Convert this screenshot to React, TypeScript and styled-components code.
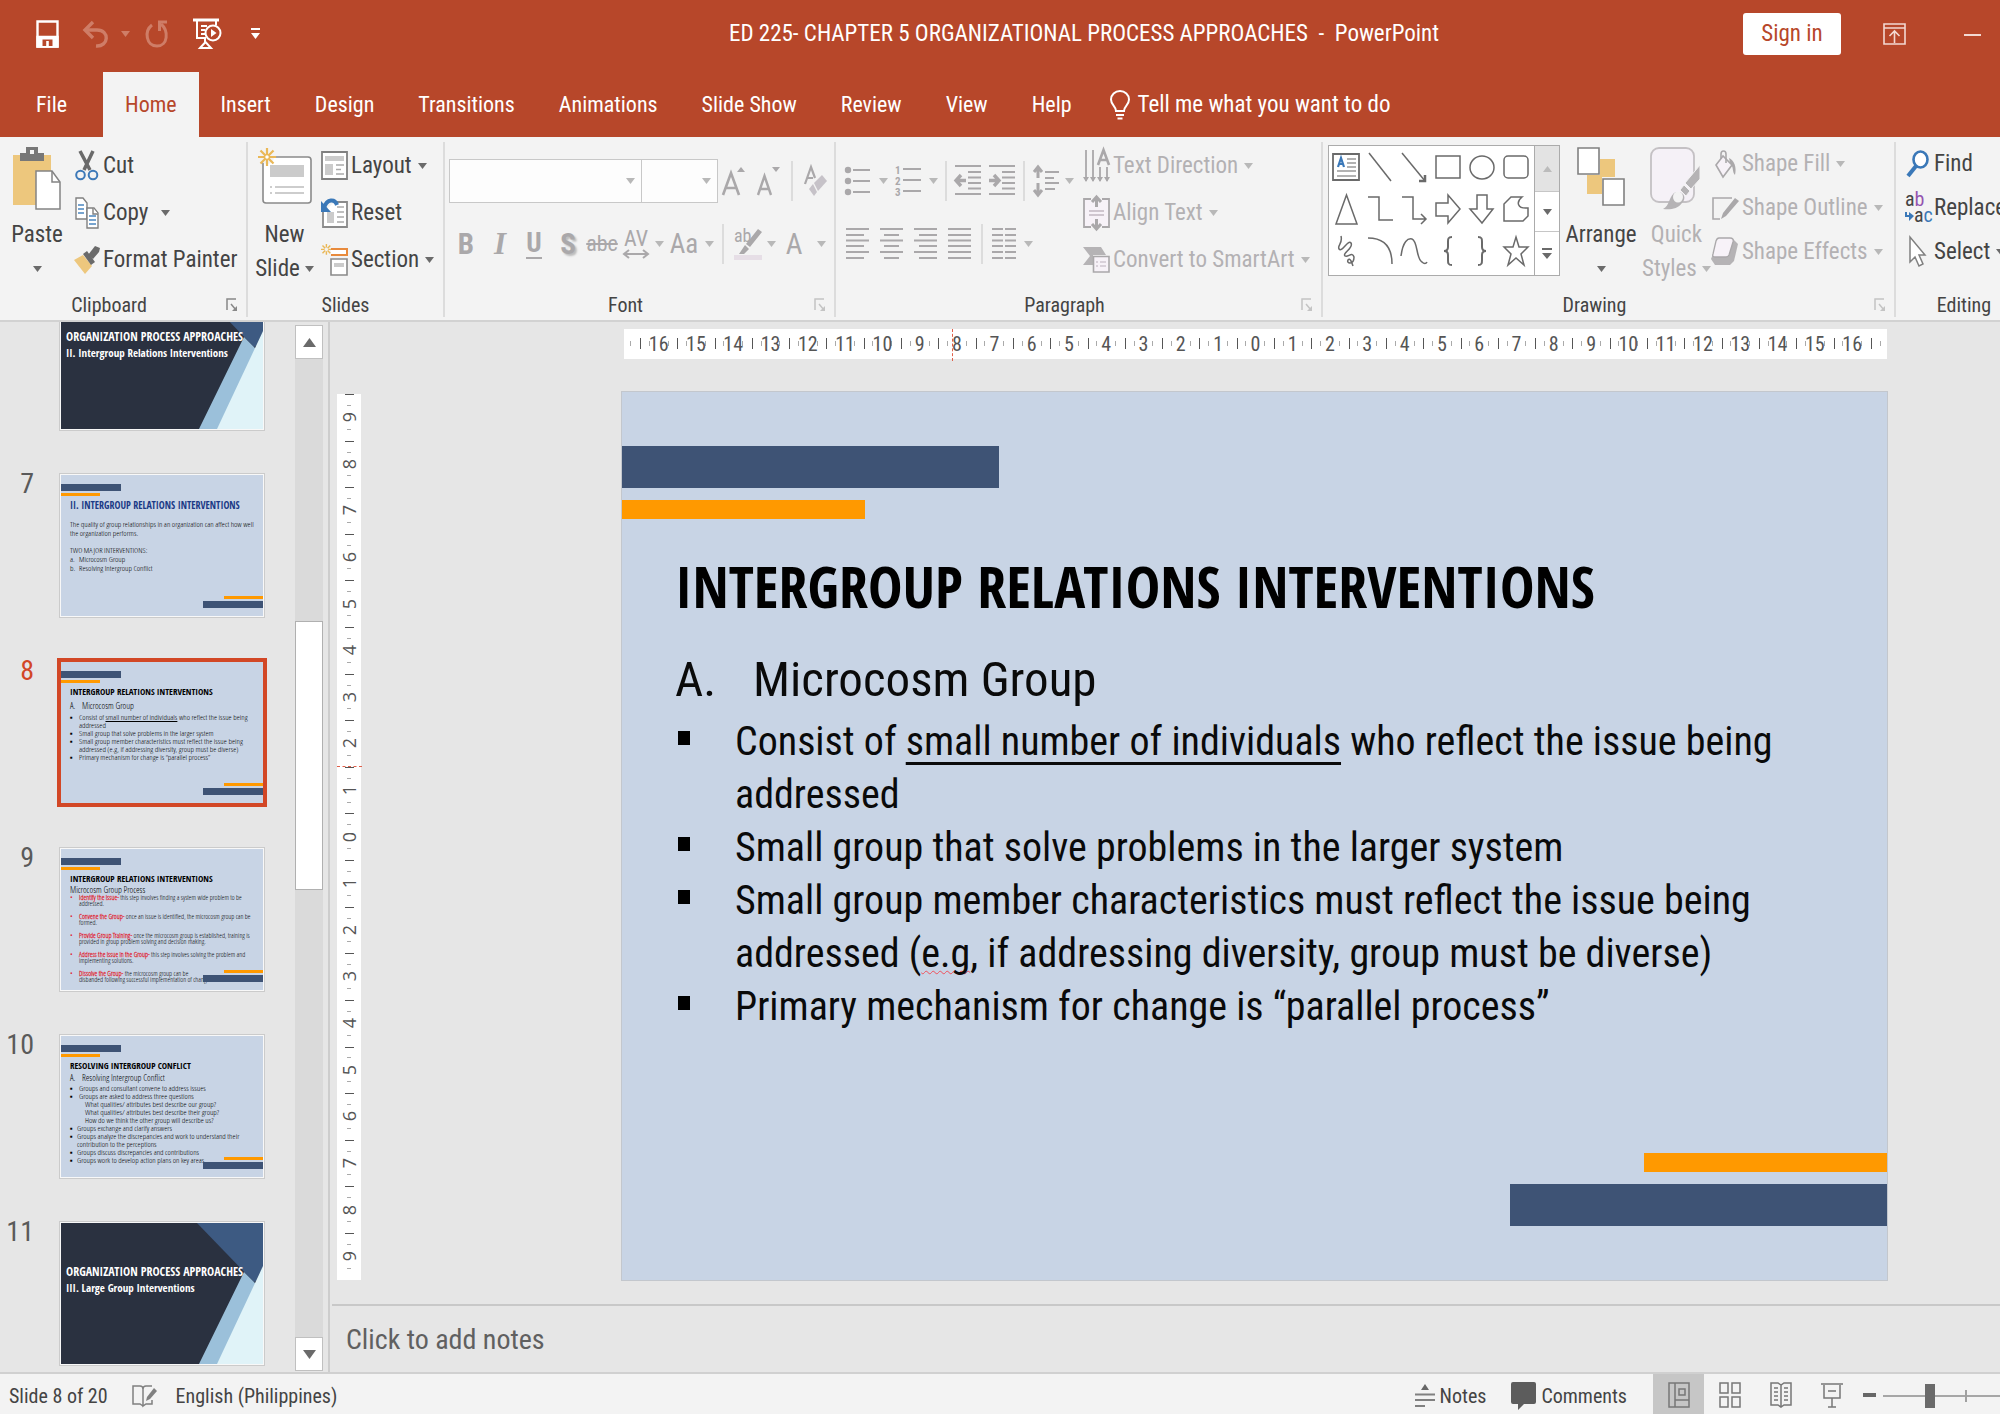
import React from "react";
import styled, { createGlobalStyle, css } from "styled-components";

const ui = `"Roboto Condensed", Roboto, "Open Sans", sans-serif`;
const heading = `"Open Sans Condensed", "Roboto Condensed", sans-serif`;
const mini = `"Open Sans Condensed Light", "Open Sans Condensed", "Roboto Condensed", sans-serif`;

const c = {
  brand: "#b7472a",
  ribbon: "#f3f3f3",
  stage: "#e6e6e6",
  line: "#c8c8c8",
  text: "#444444",
  off: "#b3b1b3",
  offIcon: "#aaa8aa",
  slide: "#c8d4e5",
  navy: "#3e5375",
  orange: "#ff9900",
  select: "#d24726",
};

const GlobalStyle = createGlobalStyle`
  *, *::before, *::after { box-sizing: border-box; }
  body { margin: 0; background: ${c.stage}; font-family: ${ui}; color: ${c.text}; }
  button, input, select { font: inherit; color: inherit; border: 0; background: none; padding: 0; margin: 0; }
  h1, h2, ul, p { margin: 0; padding: 0; font-weight: normal; }
  ul { list-style: none; }
  svg { display: block; flex: none; overflow: visible; }
`;

/* ---------- shell ---------- */

const Shell = styled.div`
  display: flex;
  flex-direction: column;
  height: 100vh;
  min-height: 900px;
  overflow: hidden;
`;

const TitleBar = styled.header`
  display: grid;
  grid-template-columns: 1fr auto 1fr;
  align-items: center;
  height: 72px;
  padding-bottom: 5px;
  background: ${c.brand};
  color: #fff;
`;

const QuickAccess = styled.div`
  display: flex;
  align-items: center;
  padding-left: 36px;
`;

const QuickButton = styled.button<{ $gap: number }>`
  display: flex;
  align-items: center;
  margin-right: ${(p) => p.$gap}px;
`;

const DocTitle = styled.h1`
  font-size: 23px;
  line-height: 30px;
  white-space: pre;
  padding-left: 168px;
`;

const WindowTools = styled.div`
  display: flex;
  align-items: center;
  justify-content: flex-end;
  padding-right: 19px;
`;

const SignIn = styled.button`
  width: 98px;
  height: 42px;
  margin-right: 42px;
  border-radius: 3px;
  background: #fff;
  color: ${c.brand};
  font-size: 23px;
`;

const WindowButton = styled.button<{ $gap?: number }>`
  margin-right: ${(p) => p.$gap ?? 0}px;
`;

const TabBar = styled.nav`
  display: flex;
  height: 65px;
  background: ${c.brand};
  color: #fff;
`;

const Tab = styled.button<{ $active?: boolean; $first?: boolean }>`
  padding: 0 22px;
  font-size: 22px;
  line-height: 64px;
  white-space: nowrap;
  ${(p) => p.$first && css`padding: 0 36px;`}
  ${(p) => p.$active && css`
    background: ${c.ribbon};
    color: ${c.brand};
  `}
`;

const TellMe = styled.button`
  display: flex;
  align-items: center;
  gap: 8px;
  padding: 0 16px;
  font-size: 23px;
  white-space: nowrap;
`;

/* ---------- ribbon ---------- */

const Ribbon = styled.section`
  display: flex;
  height: 185px;
  background: ${c.ribbon};
  border-bottom: 2px solid #d2d2d2;
  overflow: hidden;
`;

const GroupBox = styled.div<{ $w?: number }>`
  flex: ${(p) => (p.$w ? `0 0 ${p.$w}px` : "1 0 136px")};
  display: flex;
  flex-direction: column;
  justify-content: space-between;
  margin: 5px 0 3px;
  border-right: ${(p) => (p.$w ? "2px solid #dcdcdc" : "0")};
`;

const GroupBody = styled.div<{ $pad?: number }>`
  display: flex;
  align-items: flex-start;
  padding-left: ${(p) => p.$pad ?? 0}px;
`;

const GroupFoot = styled.div`
  display: flex;
  align-items: center;
  font-size: 20px;
  line-height: 24px;
  text-align: center;
  white-space: nowrap;
`;

const Launcher = styled.button`
  flex: 0 0 28px;
  display: grid;
  place-items: center;
`;

const GroupName = styled.span`
  flex: 1;
`;

const Big = styled.button<{ $w: number; $off?: boolean }>`
  flex: 0 0 ${(p) => p.$w}px;
  display: flex;
  flex-direction: column;
  align-items: center;
  padding-top: 5px;
  font-size: 23px;
  line-height: 34px;
  white-space: nowrap;
  color: ${(p) => (p.$off ? c.off : c.text)};
`;

const BigIcon = styled.span`
  height: 71px;
`;

const BigLine = styled.span`
  display: flex;
  align-items: center;
  gap: 5px;
  height: 34px;
`;

const Stack = styled.div<{ $left?: number; $row?: number }>`
  display: grid;
  grid-auto-rows: ${(p) => p.$row ?? 47}px;
  margin-left: ${(p) => p.$left ?? 0}px;
`;

const Command = styled.button<{ $off?: boolean; $gap?: number }>`
  display: flex;
  align-items: center;
  gap: ${(p) => p.$gap ?? 6}px;
  font-size: 23px;
  line-height: 30px;
  white-space: nowrap;
  color: ${(p) => (p.$off ? c.off : c.text)};
`;

const CommandIcon = styled.span`
  display: flex;
  width: 27px;
  justify-content: center;
`;

const CommandLabel = styled.span`
  display: flex;
  align-items: center;
  gap: 3px;
`;

const Rows = styled.div`
  display: grid;
  grid-template-rows: 44px 44px;
  row-gap: 19px;
  padding-top: 17px;
`;

const ToolRow = styled.div`
  display: flex;
  align-items: center;
`;

const Tool = styled.button<{ $w?: number }>`
  flex: 0 0 ${(p) => p.$w ?? 34}px;
  height: 40px;
  display: flex;
  align-items: center;
  justify-content: center;
  color: ${c.offIcon};
`;

const Divider = styled.span<{ $m: number }>`
  width: 2px;
  height: 40px;
  margin: 0 ${(p) => p.$m}px;
  background: #dcdcdc;
`;

const Letter = styled.span<{ $size: number; $kind?: string }>`
  font-family: "Open Sans", sans-serif;
  font-size: ${(p) => p.$size}px;
  line-height: 32px;
  ${(p) => p.$kind === "bold" && css`font-family: ${ui}; font-weight: bold;`}
  ${(p) => p.$kind === "italic" && css`font-family: "Liberation Serif", serif; font-style: italic; font-weight: bold;`}
  ${(p) => p.$kind === "underline" && css`
    font-family: ${ui}; font-weight: bold; line-height: 27px; border-bottom: 2px solid ${c.offIcon};
  `}
  ${(p) => p.$kind === "shadow" && css`font-family: ${ui}; font-weight: bold; text-shadow: 2px 2px 2px #bbb;`}
  ${(p) => p.$kind === "strike" && css`font-family: ${ui}; text-decoration: line-through;`}
  ${(p) => p.$kind === "narrow" && css`font-family: ${ui};`}
`;

const Spaced = styled.span`
  display: flex;
  flex-direction: column;
  align-items: center;
  font-size: 22px;
  line-height: 20px;
`;

const Combo = styled.label<{ $w: number }>`
  position: relative;
  display: block;
  width: ${(p) => p.$w}px;
  height: 44px;
  margin-right: -1px;
  background: #fdfdfd;
  border: 1px solid ${c.line};
  select { width: 100%; height: 100%; appearance: none; }
  svg { position: absolute; right: 6px; top: 18px; pointer-events: none; }
`;

const Gallery = styled.div`
  display: flex;
  height: 131px;
  margin: 3px 0 0 5px;
  border: 1px solid #ababab;
  background: #fff;
`;

const Shapes = styled.div`
  display: grid;
  grid-template-columns: repeat(6, 34px);
  grid-template-rows: repeat(3, 42px);
  width: 205px;
`;

const Shape = styled.button`
  display: grid;
  place-items: center;
`;

const GalleryNav = styled.div`
  display: grid;
  grid-template-rows: 45px 40px 44px;
  width: 25px;
  border-left: 1px solid #ababab;
`;

const NavButton = styled.button<{ $dim?: boolean }>`
  display: grid;
  place-items: center;
  background: ${(p) => (p.$dim ? "#e3e3e3" : "#fff")};
  & + & { border-top: 1px solid #c6c6c6; }
`;

/* ---------- workspace ---------- */

const Workspace = styled.main`
  flex: 1;
  display: flex;
  min-height: 0;
`;

const Panel = styled.aside`
  flex: 0 0 295px;
  display: flex;
  flex-direction: column;
  justify-content: flex-end;
  gap: 42px;
  padding-bottom: 6px;
  overflow: hidden;
`;

const ThumbRow = styled.div`
  flex: none;
  display: grid;
  grid-template-columns: 34px 206px;
  column-gap: 25px;
`;

const ThumbNumber = styled.span<{ $on?: boolean }>`
  font-size: 28px;
  line-height: 22px;
  text-align: right;
  color: ${(p) => (p.$on ? c.select : "#5a5a5a")};
`;

const ThumbFrame = styled.button<{ $on?: boolean }>`
  width: 206px;
  height: 145px;
  padding: 1px;
  text-align: left;
  background: #f8f8f8;
  border: 1px solid #cbcbcb;
  ${(p) => p.$on && css`outline: 4px solid ${c.select}; outline-offset: -2px;`}
`;

const Mini = styled.span<{ $lh: number; $size: number }>`
  position: relative;
  display: flex;
  flex-direction: column;
  width: 202px;
  height: 141px;
  padding: 9px 4px 0 9px;
  overflow: hidden;
  background: ${c.slide};
  color: #000;
  font-family: ${mini};
  font-size: ${(p) => p.$size}px;
  line-height: ${(p) => p.$lh}px;
  white-space: nowrap;
`;

const MiniBar = styled.span<{ $w: number; $h: number; $bg: string }>`
  display: block;
  flex: none;
  width: ${(p) => p.$w}px;
  height: ${(p) => p.$h}px;
  background: ${(p) => p.$bg};
`;

const MiniTop = styled.span`
  display: grid;
  gap: 2px;
  margin-left: -9px;
  margin-bottom: 3px;
`;

const MiniBottom = styled.span`
  position: absolute;
  right: 0;
  bottom: 8px;
  display: grid;
  justify-items: end;
  gap: 2px;
`;

const MiniTitle = styled.b<{ $c?: string; $size?: number }>`
  font-family: ${heading};
  font-size: ${(p) => p.$size ?? 9}px;
  line-height: 12px;
  color: ${(p) => p.$c ?? "#000"};
`;

const MiniSub = styled.span<{ $lh?: number }>`
  font-size: 9px;
  line-height: ${(p) => p.$lh ?? 10}px;
`;

const MiniItem = styled.span<{ $mark?: string; $in?: number; $after?: number; $c?: string }>`
  display: flex;
  margin-bottom: ${(p) => p.$after ?? 0}px;
  &::before {
    content: "${(p) => p.$mark ?? ""}";
    flex: 0 0 ${(p) => p.$in ?? 9}px;
    color: ${(p) => p.$c ?? "#000"};
  }
  i { font-style: normal; font-weight: bold; color: #e0202c; }
`;

const MiniGap = styled.span`
  height: 8px;
`;

const DarkMini = styled.span`
  position: relative;
  display: block;
  width: 202px;
  height: 141px;
  padding: 41px 0 0 5px;
  overflow: hidden;
  background: #2a3140;
  color: #fff;
  font-family: ${heading};
  font-weight: bold;
  line-height: 16px;
  white-space: nowrap;
  svg { position: absolute; inset: 0; }
`;

const DarkText = styled.span<{ $size: number }>`
  position: relative;
  display: block;
  font-size: ${(p) => p.$size}px;
`;

const Scroll = styled.div`
  flex: 0 0 28px;
  display: grid;
  grid-template-rows: 34px 262fr 269fr 447fr 34px;
  margin: 3px 5px 1px 0;
  background: #dadada;
`;

const ScrollButton = styled.button<{ $last?: boolean }>`
  grid-row: ${(p) => (p.$last ? 5 : 1)};
  display: grid;
  place-items: center;
  background: #fff;
  border: 1px solid #c0c0c0;
`;

const ScrollThumb = styled.span`
  grid-row: 3;
  background: #fff;
  border: 1px solid #b0b0b0;
`;

const Editor = styled.div`
  flex: 1;
  min-width: 0;
  display: flex;
  flex-direction: column;
  border-left: 2px solid #cdcdcd;
`;

const Stage = styled.div`
  flex: 1;
  min-height: 0;
  display: grid;
  grid-template-columns: 24px minmax(0, 1fr);
  grid-template-rows: 30px auto;
  row-gap: 32px;
  column-gap: 260px;
  padding: 7px 112px 0 7px;
  align-content: start;
`;

const HRuler = styled.div`
  position: relative;
  grid-column: 2;
  display: flex;
  margin: 0 1px 0 3px;
  background: #fff;
`;

const tick = (col: string) => `linear-gradient(${col}, ${col})`;

const HCell = styled.span`
  flex: 1 1 0;
  min-width: 0;
  display: flex;
  justify-content: center;
  font-size: 20px;
  line-height: 31px;
  color: #555;
  background: ${tick("#555")} 0 9px / 1px 11px no-repeat, ${tick("#aaa")} 24% 12px / 1px 5px no-repeat,
    ${tick("#aaa")} 76% 12px / 1px 5px no-repeat;
`;

const HCap = styled.span<{ $end?: boolean }>`
  flex: 0 0 16px;
  background: ${tick("#aaa")} ${(p) => (p.$end ? 9 : 6)}px 12px / 1px 5px no-repeat,
    ${(p) => tick(p.$end ? "#555" : "#fff")} 0 9px / 1px 11px no-repeat;
`;

const HMark = styled.span`
  position: absolute;
  left: 26%;
  top: 0;
  height: 32px;
  border-left: 1px dashed #e0604a;
`;

const VRuler = styled.div`
  position: relative;
  display: flex;
  flex-direction: column;
  margin: 3px 0 1px;
  background: #fff;
`;

const VCell = styled.span`
  flex: 1 1 0;
  display: flex;
  align-items: center;
  justify-content: center;
  background: ${tick("#555")} 50% 0 / 9px 1px no-repeat, ${tick("#aaa")} 50% 24% / 4px 1px no-repeat,
    ${tick("#aaa")} 50% 76% / 4px 1px no-repeat;
  span {
    writing-mode: vertical-rl;
    transform: rotate(180deg);
    font-family: "Open Sans", sans-serif;
    font-size: 18px;
    line-height: 24px;
    color: #555;
  }
`;

const VMark = styled.span`
  position: absolute;
  top: 42%;
  left: 0;
  width: 25px;
  border-top: 1px dashed #e0604a;
`;

const Slide = styled.article`
  display: flex;
  flex-direction: column;
  aspect-ratio: 1266 / 889;
  padding: 54px 0;
  background: ${c.slide};
  border: 1px solid #c3c7cd;
  color: #0a0a0a;
`;

const Bar = styled.span<{ $w: string; $h: number; $bg: string; $end?: boolean }>`
  flex: none;
  width: ${(p) => p.$w};
  height: ${(p) => p.$h}px;
  background: ${(p) => p.$bg};
  align-self: ${(p) => (p.$end ? "flex-end" : "flex-start")};
`;

const SlideText = styled.div`
  flex: 1;
  padding: 35px 70px 0 53px;
`;

const SlideTitle = styled.h2`
  margin-bottom: 30px;
  font-family: ${heading};
  font-weight: bold;
  font-size: 58px;
  line-height: 64px;
  color: #000;
  white-space: nowrap;
`;

const SlideSub = styled.p`
  display: flex;
  margin-bottom: 3px;
  font-size: 49px;
  line-height: 64px;
  span { flex: 0 0 78px; }
`;

const Bullet = styled.li`
  position: relative;
  padding-left: 60px;
  font-size: 40px;
  line-height: 53px;
  &::before {
    content: "";
    position: absolute;
    left: 3px;
    top: 16px;
    width: 12px;
    height: 14px;
    background: #000;
  }
  u { text-decoration-thickness: 3px; text-underline-offset: 7px; text-decoration-skip-ink: none; }
`;

const Misspelt = styled.span`
  text-decoration: underline wavy #f0505a 1px;
  text-underline-offset: 3px;
  text-decoration-skip-ink: none;
`;

const Spacer = styled.span`
  flex: 0 0 12px;
`;

const Notes = styled.label`
  display: block;
  margin-left: 2px;
  border-top: 2px solid #c8c8c8;
  input {
    width: 100%;
    height: 66px;
    padding: 0 14px;
    font-size: 28px;
    outline: 0;
  }
  input::placeholder { color: #606060; opacity: 1; }
`;

/* ---------- status bar ---------- */

const Status = styled.footer`
  flex: none;
  display: flex;
  align-items: center;
  height: 42px;
  padding-left: 9px;
  background: ${c.ribbon};
  border-top: 2px solid #d0d0d0;
  font-size: 20px;
  white-space: nowrap;
  overflow: hidden;
`;

const StatusItem = styled.button<{ $gap: number }>`
  display: flex;
  align-items: center;
  gap: 5px;
  padding-top: 3px;
  margin-right: ${(p) => p.$gap}px;
`;

const StatusRight = styled.div`
  display: flex;
  align-items: center;
  height: 100%;
  margin-left: auto;
`;

const ViewButton = styled.button<{ $on?: boolean }>`
  display: grid;
  place-items: center;
  width: 51px;
  height: 100%;
  padding-top: 2px;
  background: ${(p) => (p.$on ? "#c6c6c6" : "transparent")};
`;

const ZoomOut = styled.button`
  margin: 2px 7px 0 6px;
`;

const ZoomTrack = styled.label`
  position: relative;
  flex: none;
  width: 117px;
  height: 40px;
  padding-top: 2px;
  overflow: hidden;
  &::after {
    content: "";
    position: absolute;
    left: 82px;
    top: 16px;
    width: 2px;
    height: 12px;
    background: #a0a0a0;
  }
  input {
    display: block;
    width: 166px;
    height: 40px;
    appearance: none;
    background: ${tick("#a6a6a6")} 0 50% / 100% 2px no-repeat;
  }
  input::-webkit-slider-thumb {
    appearance: none;
    width: 10px;
    height: 24px;
    background: #6a6a6a;
  }
`;

/* ---------- icons ---------- */

const Caret = ({ off, color }: { off?: boolean; color?: string }) => (
  <svg width="9" height="6" viewBox="0 0 9 6"><path d="M0 0H9L4.5 6Z" fill={color ?? (off ? "#b8b8b8" : "#6a6a6a")} /></svg>
);

const g = c.offIcon;

const SaveIcon = () => (
  <svg width="23" height="28" viewBox="0 0 23 28" fill="none" stroke="#fff" strokeWidth="2.4">
    <path d="M1.5 1.5H21.5V26.5H1.5Z" /><path d="M1.5 17H21.5V26.5H1.5Z" fill="#fff" />
    <path d="M6.5 19.5H16.5V26H6.5Z" fill={c.brand} stroke="none" /><path d="M11.5 21V26" strokeWidth="2.6" />
  </svg>
);
const UndoIcon = () => (
  <svg width="25" height="28" viewBox="0 0 25 28" fill="none" stroke="#cf7d67" strokeWidth="3.4">
    <path d="M2 10H14C27 10 26 27 13 26" /><path d="M10 2L2 10L10 18" />
  </svg>
);
const RedoIcon = () => (
  <svg width="22" height="28" viewBox="0 0 22 28" fill="none" stroke="#cf7d67" strokeWidth="3">
    <path d="M6 5C-2 11 0 26 11 26S23 11 15 4" /><path d="M21 2H13.5V11" />
  </svg>
);
const ShowIcon = () => (
  <svg width="28" height="31" viewBox="0 0 28 31" fill="none" stroke="#fff" strokeWidth="2">
    <path d="M0 2H26" strokeWidth="3" /><path d="M4 3V20H13M23 3V7" /><path d="M8 8H14M8 12H12M8 16H12" />
    <circle cx="20" cy="15" r="7.5" /><path d="M18 11L23.500 15L18 19Z" fill="#fff" stroke="none" />
    <path d="M12 21V25M7 30L12.500 24L18 30Z" />
  </svg>
);
const MoreIcon = () => (
  <svg width="9" height="11" viewBox="0 0 9 11"><path d="M0 0H9V2H0ZM0 5H9L4.500 11Z" fill="#fff" /></svg>
);
const RibbonToggle = () => (
  <svg width="23" height="22" viewBox="0 0 23 22" fill="none" stroke="#f3d9d2" strokeWidth="1.6">
    <path d="M1 1H22V21H1ZM1 5H22M11.500 20V8M6.500 13L11.500 8L16.500 13" />
  </svg>
);
const MinimizeIcon = () => (
  <svg width="17" height="22" viewBox="0 0 17 22"><path d="M0 11H17V13H0Z" fill="#f3d9d2" /></svg>
);
const BulbIcon = () => (
  <svg width="20" height="30" viewBox="0 0 20 30" fill="none" stroke="#fff" strokeWidth="2">
    <path d="M6 21C6 16 1 15 1 9.500A9 8.500 0 0 1 19 9.500C19 15 14 16 14 21ZM6 25H14M7.500 28.500H12.500" />
  </svg>
);

const PasteIcon = () => (
  <svg width="48" height="64" viewBox="0 0 48 64">
    <path d="M0 8H38V58H0Z" fill="#edc77d" />
    <path d="M7 6H13V0H25V6H31V14H7ZM17 3V7H21V3Z" fill="#777" fillRule="evenodd" />
    <path d="M23 24H39L47 35V62H23Z" fill="#fff" stroke="#848484" strokeWidth="1.500" />
    <path d="M39 24V35H47" fill="none" stroke="#848484" strokeWidth="1.500" />
  </svg>
);
const CutIcon = () => (
  <svg width="24" height="30" viewBox="0 0 24 30" fill="none">
    <path d="M5 0L15 19M18 0L9 19" stroke="#6a6a6a" strokeWidth="3.500" />
    <circle cx="5.500" cy="24" r="4.300" stroke="#3d79b8" strokeWidth="2" /><circle cx="18" cy="24" r="4.300" stroke="#3d79b8" strokeWidth="2" />
  </svg>
);
const CopyIcon = () => (
  <svg width="24" height="32" viewBox="0 0 24 32" fill="#fff" stroke="#808080" strokeWidth="1.400">
    <path d="M1 1H8L12 6V22H1Z" /><path d="M3 8H9M3 12H9M3 16H9" stroke="#4b86c0" />
    <path d="M12 11H19L23 16V31H12Z" /><path d="M18 11V17H23" /><path d="M14 19H21M14 23H21M14 27H21" stroke="#4b86c0" />
  </svg>
);
const BrushIcon = () => (
  <svg width="26" height="28" viewBox="0 0 26 28">
    <path d="M0 14L9 9L18 20L11 28Z" fill="#edc77d" /><path d="M9 8L13 5L21 16L17 19Z" fill="#6a6a6a" />
    <path d="M14 9L21 0L26 2L25 6L19 13Z" fill="#6a6a6a" />
  </svg>
);
const burst = "M9 0V6M9 12V18M0 9H6M12 9H18M2.500 2.500L7 7M11 11L15.500 15.500M15.500 2.500L11 7M7 11L2.500 15.500";
const NewSlideIcon = () => (
  <svg width="54" height="58" viewBox="0 0 54 58">
    <rect x="5" y="10" width="48" height="46" rx="3" fill="#fff" stroke="#8a8a8a" strokeWidth="1.600" />
    <path d="M12 18H46V30H12Z" fill="#cbcbcb" />
    <path d="M12 40H14M17 40H46M12 46H14M17 46H46" stroke="#bdbdbd" strokeWidth="1.600" />
    <circle cx="9" cy="10" r="7" fill="#f3f3f3" />
    <g transform="translate(0 1)"><path d={burst} stroke="#eab857" strokeWidth="2.200" /><circle cx="9" cy="9" r="2.500" fill="#fff" stroke="#eab857" strokeWidth="1.500" /></g>
  </svg>
);
const LayoutIcon = () => (
  <svg width="27" height="29" viewBox="0 0 27 29">
    <path d="M1 1H26V28H1Z" fill="#fff" stroke="#808080" strokeWidth="1.800" />
    <path d="M4 5H23V10H4ZM4 13H12V24H4Z" fill="#cbcbcb" /><path d="M15 14H23M15 18.500H20M15 23H23" stroke="#aaa" strokeWidth="1.500" />
  </svg>
);
const ResetIcon = () => (
  <svg width="27" height="30" viewBox="0 0 27 30">
    <path d="M14 4H26V29H2V14" fill="#fff" stroke="#8a8a8a" strokeWidth="1.800" />
    <path d="M6 14H13V25H6Z" fill="#cbcbcb" /><path d="M16 9H23M16 14H23M16 19H23M16 24H23" stroke="#aaa" strokeWidth="1.500" />
    <path d="M3 10C6 0 14 1 16 7" fill="none" stroke="#3a78b8" strokeWidth="4" /><path d="M0 3V14H10Z" fill="#3a78b8" />
  </svg>
);
const SectionIcon = () => (
  <svg width="27" height="32" viewBox="0 0 27 32">
    <g transform="scale(.6)"><path d={burst} stroke="#eab857" strokeWidth="2.400" /></g>
    <path d="M10 5H26V11H10" fill="#fff" stroke="#e88a3c" strokeWidth="2" />
    <path d="M10 15H26V31H10Z" fill="#fff" stroke="#8a8a8a" strokeWidth="1.600" /><path d="M13 19H23V23H13Z" fill="#cbcbcb" />
  </svg>
);
const LaunchIcon = ({ off }: { off?: boolean }) => (
  <svg width="12" height="14" viewBox="0 0 12 14" fill="none" stroke={off ? "#c4c4c4" : "#888"} strokeWidth="1.500">
    <path d="M1 12V1H10M5 6L10 12" /><path d="M11 8V13H6Z" fill={off ? "#c4c4c4" : "#888"} stroke="none" />
  </svg>
);
const GrowA = ({ down }: { down?: boolean }) => (
  <svg width="24" height="30" viewBox="0 0 24 30" fill="none" stroke={g}>
    {down ? <path d="M2 29L8.500 10L15 29M4.500 23H12.500" strokeWidth="2.400" /> : <path d="M1 29L9 7L17 29M4 22H14" strokeWidth="2.600" />}
    <path d={down ? "M16 1H24L20 6Z" : "M15 6H23L19 1Z"} fill={g} stroke="none" />
  </svg>
);
const EraserIcon = () => (
  <svg width="24" height="32" viewBox="0 0 24 32">
    <path d="M1 19L7 2L11 13M3 13H9" fill="none" stroke={g} strokeWidth="2.200" />
    <path d="M10 18L18 10L23 16L14 26Z" fill="#c6c2c8" /><path d="M5 24L9 19L13 27L10 31Z" fill="#c6c2c8" />
  </svg>
);
const DoubleArrow = () => (
  <svg width="26" height="10" viewBox="0 0 26 10" fill="none" stroke={g} strokeWidth="2"><path d="M1 5H25M6 1L1 5L6 9M20 1L25 5L20 9" /></svg>
);
const HighlightIcon = () => (
  <svg width="28" height="34" viewBox="0 0 28 34">
    <path d="M0 28H28V33H0Z" fill="#e6dee6" />
    <path d="M24 2L28 5L16 20L12 17ZM11 18L15 22L10 27H5Z" fill={g} />
    <text x="0" y="15" fontFamily="Roboto Condensed" fontSize="18" fill={g}>ab</text>
  </svg>
);
const Lines = ({ d, w = 24 }: { d: string; w?: number }) => (
  <svg width={w} height="32" viewBox={`0 0 ${w} 32`} fill="none" stroke={g} strokeWidth="2"><path d={d} /></svg>
);
const BulletsIcon = () => (
  <svg width="26" height="30" viewBox="0 0 26 30" stroke={g} strokeWidth="2">
    <path d="M8 4H25M8 15H25M8 26H25" />{[4, 15, 26].map((y) => <circle key={y} cx="3" cy={y} r="2.200" fill={g} />)}
  </svg>
);
const NumbersIcon = () => (
  <svg width="26" height="32" viewBox="0 0 26 32">
    <path d="M8 4H26M8 15H26M8 26H26" stroke={g} strokeWidth="2" />
    {[1, 2, 3].map((n) => <text key={n} x="0" y={n * 11 - 2} fontFamily="Roboto Condensed" fontSize="11" fontWeight="bold" fill={g}>{n}</text>)}
  </svg>
);
const IndentIcon = ({ right }: { right?: boolean }) => (
  <svg width="26" height="32" viewBox="0 0 26 32" fill="none" stroke={g} strokeWidth="2">
    <path d="M0 1H26M13 7H26M13 12.500H26M13 18H26M13 23.500H26M0 29H26" />
    <path d={right ? "M0 15.500H9M5 10L10 15.500L5 21" : "M2 15.500H11M6 10L1 15.500L6 21"} strokeWidth="3.400" />
  </svg>
);
const SpacingIcon = () => (
  <svg width="26" height="32" viewBox="0 0 26 32" fill="none" stroke={g} strokeWidth="2">
    <path d="M12 7H26M12 13H21M12 18H26M12 24H22" /><path d="M5 2V13M1 7L5 2L9 7M5 18V30M1 25L5 30L9 25" strokeWidth="3" />
  </svg>
);
const TextDirIcon = () => (
  <svg width="27" height="34" viewBox="0 0 27 34" fill="none" stroke={g} strokeWidth="1.800">
    <path d="M3 1V32M10 1V32M17 18V32M24 18V32" /><path d="M0 28H6L3 33ZM7 28H13L10 33ZM14 28H20L17 33ZM21 28H27L24 33Z" fill={g} stroke="none" />
    <path d="M15 16L20.500 1L26 16M17 11H24" strokeWidth="2.600" />
  </svg>
);
const AlignTextIcon = () => (
  <svg width="27" height="34" viewBox="0 0 27 34" fill="none" stroke={g} strokeWidth="1.800">
    <path d="M1 3H26V31H1Z" fill="#f7f2f8" stroke="none" /><path d="M8 3H1V31H8M19 3H26V31H19" />
    <path d="M6 15H21M6 19H21" stroke="#cfc6cf" /><path d="M13.500 1V11M9 6L13.500 1L18 6M13.500 23V33M9 28L13.500 33L18 28" strokeWidth="3" />
  </svg>
);
const SmartArtIcon = () => (
  <svg width="27" height="26" viewBox="0 0 27 26">
    <path d="M0 0H18L23 8H10V18H0L7 9Z" fill="#b5b3b5" /><path d="M10.500 9.500H26V25H10.500Z" fill="#f7f2f8" stroke={g} strokeWidth="1.600" />
    <path d="M13 15H15M17 15H23M13 19H15M17 19H23" stroke="#cfc6cf" strokeWidth="1.500" />
  </svg>
);

const S = ({ children, w = 26, h = 30 }: { children: React.ReactNode; w?: number; h?: number }) => (
  <svg width={w} height={h} viewBox={`0 0 ${w} ${h}`} fill="none" stroke="#6a6a6a" strokeWidth="1.500">{children}</svg>
);
const shapeIcons: [string, React.ReactNode][] = [
  ["Text box", <S h={28}><path d="M0 1H26V27H0Z" fill="#fff" strokeWidth="1.800" /><path d="M14 6H23M14 10H23M14 14H23M4 18H23M4 23H23" stroke="#999" /><path d="M5 14L8 5L11 14M6 11H10" stroke="#3a78b8" strokeWidth="2.200" /></S>],
  ["Line", <S w={24}><path d="M1 1L23 29" /></S>],
  ["Arrow", <S w={24}><path d="M0 1L23 29" /><path d="M23 23V29H17" strokeWidth="2.500" /></S>],
  ["Rectangle", <S h={24}><path d="M1 1H25V23H1Z" /></S>],
  ["Oval", <S h={25}><ellipse cx="13" cy="12.500" rx="12" ry="11.500" /></S>],
  ["Rounded rectangle", <S h={24}><rect x="1" y="1" width="24" height="22" rx="4" /></S>],
  ["Triangle", <S w={23} h={31}><path d="M11.500 1L22 30H1Z" /></S>],
  ["Elbow connector", <S h={26}><path d="M1 1H12V24H26" /></S>],
  ["Elbow arrow", <S h={30}><path d="M1 3H12V25H25M20 20L25 25L20 30" /></S>],
  ["Right arrow", <S h={30}><path d="M1 9H13V1L25 15L13 29V22H1Z" /></S>],
  ["Down arrow", <S h={30}><path d="M8 1H18V15H24L13 29L1 15H8Z" /></S>],
  ["Freeform", <S h={26}><path d="M8 1H19C13 6 14 13 25 12V20L20 25H1V8Z" /></S>],
  ["Scribble", <S w={20} h={32}><path d="M5 1C7 9 1 10 3 14C6 18 12 4 15 8C18 13 6 18 9 21C12 23 16 16 18 22C18 30 10 29 12 25C14 22 16 28 17 31" /></S>],
  ["Arc", <S h={28}><path d="M1 1C17 1 25 10 25 27" /></S>],
  ["Curve", <S w={28} h={28}><path d="M1 19C3 4 8 1 12 2C18 4 16 22 22 25C24 27 26 27 27 25" /></S>],
  ["Left brace", <S w={10} h={30}><path d="M9 1C5 1 5 3 5 6V11C5 14 4 15 1 15C4 15 5 16 5 19V24C5 27 5 29 9 29" strokeWidth="2" /></S>],
  ["Right brace", <S w={10} h={30}><path d="M1 1C5 1 5 3 5 6V11C5 14 6 15 9 15C6 15 5 16 5 19V24C5 27 5 29 1 29" strokeWidth="2" /></S>],
  ["Star", <S h={30}><path d="M13 1L16 11H25L18 18L21 29L13 22L5 29L8 18L1 11H10Z" /></S>],
];

const ArrangeIcon = () => (
  <svg width="48" height="60" viewBox="0 0 48 60">
    <path d="M23 12H38V30H23ZM10 28H25V47H10Z" fill="#edc77d" />
    <path d="M1 1H22V27H1ZM26 32H47V58H26Z" fill="#fff" stroke="#808080" strokeWidth="1.600" />
  </svg>
);
const QuickStylesIcon = () => (
  <svg width="52" height="64" viewBox="0 0 52 64">
    <rect x="1" y="1" width="43" height="54" rx="8" fill="#f5f1f7" stroke="#c4c1c4" strokeWidth="1.800" />
    <path d="M50 18V32L41 42L35 36ZM34 38L40 44L36 49L30 43Z" fill="#b5b3b5" stroke="#f3f3f3" />
    <path d="M13 62C20 58 18 52 24 46C32 42 38 50 32 56C28 62 20 63 13 62Z" fill="#b5b3b5" />
    <ellipse cx="28" cy="50" rx="5" ry="5.500" fill="#f3f3f3" />
  </svg>
);
const FillIcon = () => (
  <svg width="24" height="28" viewBox="0 0 24 28">
    <path d="M3 15L10 6L19 15L10 27Z" fill="#f7f2f8" stroke={g} strokeWidth="1.600" /><path d="M8 9V4C8 0 13 0 13 4V13" fill="none" stroke={g} strokeWidth="1.600" />
    <path d="M16 8C21 10 24 17 22 25C19 22 21 17 17 13Z" fill={g} />
  </svg>
);
const OutlineIcon = () => (
  <svg width="27" height="24" viewBox="0 0 27 24">
    <path d="M20 2H1V23H8" fill="none" stroke={g} strokeWidth="1.600" /><path d="M9 23L11 17L23 2L27 5L14 20Z" fill={g} />
  </svg>
);
const EffectsIcon = () => (
  <svg width="28" height="30" viewBox="0 0 28 30">
    <path d="M8 2H22L27 7L23 24L19 28H4L0 22Z" fill="#b5b3b5" /><path d="M8 1H19Q23 1 22 5L18 18Q17 20 15 20H4Q1 20 2 17L5 4Q6 1 8 1Z" fill="#f7f2f8" stroke={g} strokeWidth="1.300" />
  </svg>
);
const FindIcon = () => (
  <svg width="22" height="28" viewBox="0 0 22 28" fill="#fff" stroke="#3a78b8"><path d="M9 16L1 26" strokeWidth="4" /><ellipse cx="13.500" cy="9.500" rx="7" ry="8" strokeWidth="2.600" /></svg>
);
const ReplaceIcon = () => (
  <svg width="26" height="32" viewBox="0 0 26 32" fontFamily="Roboto Condensed" fontSize="20">
    <text x="0" y="14" fill="#444">a<tspan fill="#9355b0">b</tspan></text><text x="9" y="30" fill="#444">a<tspan fill="#3a78b8">c</tspan></text>
    <path d="M1 20V24H6" fill="none" stroke="#3a78b8" strokeWidth="2" /><path d="M4 20V29L9 24Z" fill="#3a78b8" />
  </svg>
);
const SelectIcon = () => (
  <svg width="18" height="32" viewBox="0 0 18 32"><path d="M1 1V26L6 21L10 30L14 28L10 19H16Z" fill="#fff" stroke="#808080" strokeWidth="1.500" /></svg>
);

const ProofIcon = () => (
  <svg width="25" height="24" viewBox="0 0 25 24" fill="none" stroke="#808080" strokeWidth="1.500">
    <path d="M11 22L8 20H1V2H8Q11 2 11 5Q11 2 14 2H20M11 5V22L14 20H20V16" /><path d="M14 17L15 13L22 4L25 7L18 15Z" fill="#808080" stroke="none" />
  </svg>
);
const NotesIcon = () => (
  <svg width="20" height="24" viewBox="0 0 20 24"><path d="M0 10.500H20M0 16H20M0 22H10" stroke="#808080" strokeWidth="2" /><path d="M6 6H14L10 0Z" fill="#666" /></svg>
);
const CommentIcon = () => (
  <svg width="25" height="28" viewBox="0 0 25 28"><path d="M2 0H23Q25 0 25 2V20Q25 22 23 22H13L7 28V22H2Q0 22 0 20V2Q0 0 2 0Z" fill="#5c5c5c" /></svg>
);
const V = ({ d, w = 22 }: { d: string; w?: number }) => (
  <svg width={w} height="26" viewBox={`0 0 ${w} 26`} fill="none" stroke="#777" strokeWidth="1.500"><path d={d} /></svg>
);

/* ---------- parts ---------- */

function Group({ name, w, pad, launcher, children }: { name: string; w?: number; pad?: number; launcher?: "on" | "off"; children: React.ReactNode }) {
  return (
    <GroupBox $w={w}>
      <GroupBody $pad={pad}>{children}</GroupBody>
      <GroupFoot>
        <GroupName>{name}</GroupName>
        {launcher && <Launcher aria-label={`${name} settings`}><LaunchIcon off={launcher === "off"} /></Launcher>}
      </GroupFoot>
    </GroupBox>
  );
}

function Cmd({ icon, label, menu, off, gap }: { icon: React.ReactNode; label: string; menu?: boolean; off?: boolean; gap?: number }) {
  return (
    <Command $off={off} $gap={gap}>
      <CommandLabel><CommandIcon>{icon}</CommandIcon>{label}</CommandLabel>
      {menu && <Caret off={off} />}
    </Command>
  );
}

const Drop = ({ label, w = 12 }: { label: string; w?: number }) => (
  <Tool $w={w} aria-label={label}><Caret off /></Tool>
);

const MiniBars = ({ children, size = 8, lh = 8 }: { children: React.ReactNode; size?: number; lh?: number }) => (
  <Mini $size={size} $lh={lh}>
    <MiniTop><MiniBar $w={60} $h={7} $bg={c.navy} /><MiniBar $w={39} $h={3} $bg={c.orange} /></MiniTop>
    <MiniBottom><MiniBar $w={39} $h={3} $bg={c.orange} /><MiniBar $w={60} $h={7} $bg={c.navy} /></MiniBottom>
    {children}
  </Mini>
);

const DarkSlide = ({ line }: { line: string }) => (
  <DarkMini>
    <svg width="202" height="141" viewBox="0 0 202 141">
      <path d="M136 0H202V44L195 58L193 59Z" fill="#3d5a82" /><path d="M183 49L194 60L200 60L160 141H138Z" fill="#9bc0da" /><path d="M202 43V141H156Z" fill="#e0f3f8" />
    </svg>
    <DarkText $size={12}>ORGANIZATION PROCESS APPROACHES</DarkText>
    <DarkText $size={11}>{line}</DarkText>
  </DarkMini>
);

const sq = "▪";
const steps: [string, string, string][] = [
  ["Identify the issue-", " this step involves finding a system wide problem to be", "addressed."],
  ["Convene the Group-", " once an issue is identified, the microcosm group can be", "formed."],
  ["Provide Group Training-", " once the microcosm group is established, training is", "provided in group problem solving and decision making."],
  ["Address the issue in the Group-", " this step involves solving the problem and", "implementing solutions."],
  ["Dissolve the Group-", " the microcosm group can be", "disbanded following successful implementation of change."],
];

const thumbs: { id: number; label?: number; view: React.ReactNode }[] = [
  { id: 6, view: <DarkSlide line="II. Intergroup Relations Interventions" /> },
  {
    id: 7,
    label: 7,
    view: (
      <MiniBars lh={9}>
        <MiniTitle $c="#1b3a86" $size={10}>II. INTERGROUP RELATIONS INTERVENTIONS</MiniTitle>
        <MiniGap />
        <span>The quality of group relationships in an organization can affect how well</span>
        <span>the organization performs.</span>
        <MiniGap />
        <span>TWO MAJOR INTERVENTIONS:</span>
        <MiniItem $mark="a.">Microcosm Group</MiniItem>
        <MiniItem $mark="b.">Resolving Intergroup Conflict</MiniItem>
      </MiniBars>
    ),
  },
  {
    id: 8,
    label: 8,
    view: (
      <MiniBars>
        <MiniTitle>INTERGROUP RELATIONS INTERVENTIONS</MiniTitle>
        <MiniSub $lh={15}><MiniItem $mark="A." $in={12}>Microcosm Group</MiniItem></MiniSub>
        <MiniItem $mark={sq}><span>Consist of <u>small number of individuals</u> who reflect the issue being</span></MiniItem>
        <MiniItem>addressed</MiniItem>
        <MiniItem $mark={sq}>Small group that solve problems in the larger system</MiniItem>
        <MiniItem $mark={sq}>Small group member characteristics must reflect the issue being</MiniItem>
        <MiniItem>addressed (e.g, if addressing diversity, group must be diverse)</MiniItem>
        <MiniItem $mark={sq}>Primary mechanism for change is “parallel process”</MiniItem>
      </MiniBars>
    ),
  },
  {
    id: 9,
    label: 9,
    view: (
      <MiniBars size={7} lh={6}>
        <MiniTitle>INTERGROUP RELATIONS INTERVENTIONS</MiniTitle>
        <MiniSub>Microcosm Group Process</MiniSub>
        {steps.map(([a, b, d]) => (
          <React.Fragment key={a}>
            <MiniItem $mark="•" $c="#e0202c"><span><i>{a}</i>{b}</span></MiniItem>
            <MiniItem $after={7}>{d}</MiniItem>
          </React.Fragment>
        ))}
      </MiniBars>
    ),
  },
  {
    id: 10,
    label: 10,
    view: (
      <MiniBars>
        <MiniTitle>RESOLVING INTERGROUP CONFLICT</MiniTitle>
        <MiniSub $lh={12}><MiniItem $mark="A." $in={12}>Resolving Intergroup Conflict</MiniItem></MiniSub>
        <MiniItem $mark={sq}>Groups and consultant convene to address issues</MiniItem>
        <MiniItem $mark={sq}>Groups are asked to address three questions</MiniItem>
        <MiniItem $in={15}>What qualities/ attributes best describe our group?</MiniItem>
        <MiniItem $in={15}>What qualities/ attributes best describe their group?</MiniItem>
        <MiniItem $in={15}>How do we think the other group will describe us?</MiniItem>
        <MiniItem $mark={sq} $in={7}>Groups exchange and clarify answers</MiniItem>
        <MiniItem $mark={sq} $in={7}>Groups analyze the discrepancies and work to understand their</MiniItem>
        <MiniItem $in={7}>contribution to the perceptions</MiniItem>
        <MiniItem $mark={sq} $in={7}>Groups discuss discrepancies and contributions</MiniItem>
        <MiniItem $mark={sq} $in={7}>Groups work to develop action plans on key areas</MiniItem>
      </MiniBars>
    ),
  },
  { id: 11, label: 11, view: <DarkSlide line="III. Large Group Interventions" /> },
];

const scale = (n: number) => Array.from({ length: 2 * n + 1 }, (_, i) => Math.abs(i - n));

export default function App() {
  return (
    <Shell>
      <GlobalStyle />
      <TitleBar>
        <QuickAccess>
          <QuickButton $gap={24} aria-label="Save"><SaveIcon /></QuickButton>
          <QuickButton $gap={13} aria-label="Undo"><UndoIcon /></QuickButton>
          <QuickButton $gap={16} aria-label="Undo history"><Caret color="#cf7d67" /></QuickButton>
          <QuickButton $gap={25} aria-label="Repeat"><RedoIcon /></QuickButton>
          <QuickButton $gap={30} aria-label="Start from beginning"><ShowIcon /></QuickButton>
          <QuickButton $gap={0} aria-label="Customize toolbar"><MoreIcon /></QuickButton>
        </QuickAccess>
        <DocTitle>{"ED 225- CHAPTER 5 ORGANIZATIONAL PROCESS APPROACHES  -  PowerPoint"}</DocTitle>
        <WindowTools>
          <SignIn>Sign in</SignIn>
          <WindowButton $gap={58} aria-label="Ribbon display options"><RibbonToggle /></WindowButton>
          <WindowButton aria-label="Minimize"><MinimizeIcon /></WindowButton>
        </WindowTools>
      </TitleBar>

      <TabBar>
        <Tab $first>File</Tab>
        <Tab $active>Home</Tab>
        {["Insert", "Design", "Transitions", "Animations", "Slide Show", "Review", "View", "Help"].map((t) => <Tab key={t}>{t}</Tab>)}
        <TellMe><BulbIcon />Tell me what you want to do</TellMe>
      </TabBar>

      <Ribbon>
        <Group name="Clipboard" w={248} pad={8} launcher="on">
          <Big $w={58}><BigIcon><PasteIcon /></BigIcon><BigLine>Paste</BigLine><BigLine><Caret /></BigLine></Big>
          <Stack $left={7}>
            <Cmd icon={<CutIcon />} label="Cut" />
            <Cmd icon={<CopyIcon />} label="Copy" menu gap={13} />
            <Cmd icon={<BrushIcon />} label="Format Painter" />
          </Stack>
        </Group>

        <Group name="Slides" w={197} pad={5}>
          <Big $w={63}><BigIcon><NewSlideIcon /></BigIcon><BigLine>New</BigLine><BigLine>Slide <Caret /></BigLine></Big>
          <Stack $left={5}>
            <Cmd icon={<LayoutIcon />} label="Layout" menu />
            <Cmd icon={<ResetIcon />} label="Reset" />
            <Cmd icon={<SectionIcon />} label="Section" menu />
          </Stack>
        </Group>

        <Group name="Font" w={391} pad={4} launcher="off">
          <Rows>
            <ToolRow>
              <Combo $w={193}><select aria-label="Font name" /><Caret off /></Combo>
              <Combo $w={77}><select aria-label="Font size" /><Caret off /></Combo>
              <Tool aria-label="Increase font size"><GrowA /></Tool>
              <Tool aria-label="Decrease font size"><GrowA down /></Tool>
              <Divider $m={6} />
              <Tool aria-label="Clear formatting"><EraserIcon /></Tool>
            </ToolRow>
            <ToolRow>
              <Tool aria-label="Bold"><Letter $size={29} $kind="bold">B</Letter></Tool>
              <Tool aria-label="Italic"><Letter $size={31} $kind="italic">I</Letter></Tool>
              <Tool aria-label="Underline"><Letter $size={27} $kind="underline">U</Letter></Tool>
              <Tool aria-label="Shadow"><Letter $size={29} $kind="shadow">S</Letter></Tool>
              <Tool aria-label="Strikethrough"><Letter $size={22} $kind="strike">abc</Letter></Tool>
              <Tool aria-label="Character spacing"><Spaced>AV<DoubleArrow /></Spaced></Tool>
              <Drop label="Spacing options" />
              <Tool $w={38} aria-label="Change case"><Letter $size={27} $kind="narrow">Aa</Letter></Tool>
              <Drop label="Case options" />
              <Divider $m={7} />
              <Tool aria-label="Highlight"><HighlightIcon /></Tool>
              <Drop label="Highlight colors" />
              <Tool aria-label="Font color"><Letter $size={29} $kind="narrow">A</Letter></Tool>
              <Drop label="Font colors" w={20} />
            </ToolRow>
          </Rows>
        </Group>

        <Group name="Paragraph" w={487} pad={5} launcher="off">
          <Rows>
            <ToolRow>
              <Tool aria-label="Bullets"><BulletsIcon /></Tool>
              <Drop label="Bullet styles" w={16} />
              <Tool aria-label="Numbering"><NumbersIcon /></Tool>
              <Drop label="Number styles" w={16} />
              <Divider $m={4} />
              <Tool aria-label="Decrease indent"><IndentIcon /></Tool>
              <Tool aria-label="Increase indent"><IndentIcon right /></Tool>
              <Divider $m={4} />
              <Tool aria-label="Line spacing"><SpacingIcon /></Tool>
              <Drop label="Line spacing options" />
            </ToolRow>
            <ToolRow>
              <Tool aria-label="Align left"><Lines d="M0 1H23M0 7H18M0 12.500H23M0 18H18M0 24H23M0 30H18" /></Tool>
              <Tool aria-label="Center"><Lines d="M0 1H23M4 7H19M0 12.500H23M4 18H19M0 24H23M4 30H19" /></Tool>
              <Tool aria-label="Align right"><Lines d="M0 1H23M5 7H23M0 12.500H23M5 18H23M0 24H23M5 30H23" /></Tool>
              <Tool aria-label="Justify"><Lines d="M0 1H23M0 7H23M0 12.500H23M0 18H23M0 24H23M0 30H23" /></Tool>
              <Divider $m={4} />
              <Tool aria-label="Columns"><Lines d="M0 1H11M13 1H24M0 7H11M13 7H24M0 12.500H11M13 12.500H24M0 18H11M13 18H24M0 24H11M13 24H24M0 30H11M13 30H24" /></Tool>
              <Drop label="Column options" w={14} />
            </ToolRow>
          </Rows>
          <Stack $left={8}>
            <Cmd icon={<TextDirIcon />} label="Text Direction" menu off />
            <Cmd icon={<AlignTextIcon />} label="Align Text" menu off />
            <Cmd icon={<SmartArtIcon />} label="Convert to SmartArt" menu off />
          </Stack>
        </Group>

        <Group name="Drawing" w={573} launcher="off">
          <Gallery>
            <Shapes>{shapeIcons.map(([n, i]) => <Shape key={n} aria-label={n}>{i}</Shape>)}</Shapes>
            <GalleryNav>
              <NavButton $dim aria-label="Previous shapes"><svg width="9" height="6"><path d="M0 6H9L4.500 0Z" fill="#bbb" /></svg></NavButton>
              <NavButton aria-label="Next shapes"><Caret /></NavButton>
              <NavButton aria-label="All shapes"><svg width="10" height="11"><path d="M0 0H10V2H0ZM0 5H10L5 11Z" fill="#6a6a6a" /></svg></NavButton>
            </GalleryNav>
          </Gallery>
          <Big $w={82}><BigIcon><ArrangeIcon /></BigIcon><BigLine>Arrange</BigLine><BigLine><Caret /></BigLine></Big>
          <Big $w={66} $off><BigIcon><QuickStylesIcon /></BigIcon><BigLine>Quick</BigLine><BigLine>Styles <Caret off /></BigLine></Big>
          <Stack $left={1} $row={44}>
            <Cmd icon={<FillIcon />} label="Shape Fill" menu off />
            <Cmd icon={<OutlineIcon />} label="Shape Outline" menu off />
            <Cmd icon={<EffectsIcon />} label="Shape Effects" menu off />
          </Stack>
        </Group>

        <Group name="Editing" pad={8}>
          <Stack $row={44}>
            <Cmd icon={<FindIcon />} label="Find" />
            <Cmd icon={<ReplaceIcon />} label="Replace" menu />
            <Cmd icon={<SelectIcon />} label="Select" menu />
          </Stack>
        </Group>
      </Ribbon>

      <Workspace>
        <Panel aria-label="Slides">
          {thumbs.map(({ id, label, view }) => (
            <ThumbRow key={id}>
              <ThumbNumber $on={id === 8}>{label}</ThumbNumber>
              <ThumbFrame $on={id === 8} aria-label={`Slide ${id}`}>{view}</ThumbFrame>
            </ThumbRow>
          ))}
        </Panel>
        <Scroll>
          <ScrollButton aria-label="Scroll up"><svg width="13" height="9"><path d="M0 9H13L6.500 0Z" fill="#6a6a6a" /></svg></ScrollButton>
          <ScrollThumb />
          <ScrollButton $last aria-label="Scroll down"><svg width="13" height="9"><path d="M0 0H13L6.500 9Z" fill="#6a6a6a" /></svg></ScrollButton>
        </Scroll>

        <Editor>
          <Stage>
            <HRuler>
              <HCap />
              {scale(16).map((n, i) => <HCell key={i}>{n}</HCell>)}
              <HCap $end />
              <HMark />
            </HRuler>
            <VRuler>
              {scale(9).map((n, i) => <VCell key={i}><span>{n}</span></VCell>)}
              <VMark />
            </VRuler>
            <Slide>
              <Bar $w="29.8%" $h={42} $bg={c.navy} />
              <Spacer />
              <Bar $w="19.2%" $h={19} $bg={c.orange} />
              <SlideText>
                <SlideTitle>INTERGROUP RELATIONS INTERVENTIONS</SlideTitle>
                <SlideSub><span>A.</span>Microcosm Group</SlideSub>
                <ul>
                  <Bullet>Consist of <u>small number of individuals</u> who reflect the issue being addressed</Bullet>
                  <Bullet>Small group that solve problems in the larger system</Bullet>
                  <Bullet>Small group member characteristics must reflect the issue being addressed (<Misspelt>e.g</Misspelt>, if addressing diversity, group must be diverse)</Bullet>
                  <Bullet>Primary mechanism for change is “parallel process”</Bullet>
                </ul>
              </SlideText>
              <Bar $w="19.2%" $h={19} $bg={c.orange} $end />
              <Spacer />
              <Bar $w="29.8%" $h={42} $bg={c.navy} $end />
            </Slide>
          </Stage>
          <Notes><input aria-label="Notes" placeholder="Click to add notes" /></Notes>
        </Editor>
      </Workspace>

      <Status>
        <StatusItem $gap={24}>Slide 8 of 20</StatusItem>
        <StatusItem $gap={19} aria-label="Proofing"><ProofIcon /></StatusItem>
        <StatusItem $gap={0}>English (Philippines)</StatusItem>
        <StatusRight>
          <StatusItem $gap={25}><NotesIcon />Notes</StatusItem>
          <StatusItem $gap={26}><CommentIcon />Comments</StatusItem>
          <ViewButton $on aria-label="Normal view"><V d="M1 1H21V25H1ZM7 1V25M7 18H21M11 7H17V13H11Z" /></ViewButton>
          <ViewButton aria-label="Slide sorter"><V d="M1 1H9V11H1ZM13 1H21V11H13ZM1 15H9V25H1ZM13 15H21V25H13Z" /></ViewButton>
          <ViewButton aria-label="Reading view"><V d="M11 3L8 1H1V23H8L11 25L14 23H21V1H14ZM11 3V25M4 6H8M4 10H8M4 14H8M4 18H8M14 6H18M14 10H18M14 14H18M14 18H18" /></ViewButton>
          <ViewButton aria-label="Slide show"><V d="M0 2H22M3 3V16H19V3M7 9H15M11 16V25M7 25H15" /></ViewButton>
          <ZoomOut aria-label="Zoom out"><svg width="13" height="4"><path d="M0 0H13V4H0Z" fill="#666" /></svg></ZoomOut>
          <ZoomTrack><input type="range" min={0} max={100} defaultValue={27} aria-label="Zoom" /></ZoomTrack>
        </StatusRight>
      </Status>
    </Shell>
  );
}
